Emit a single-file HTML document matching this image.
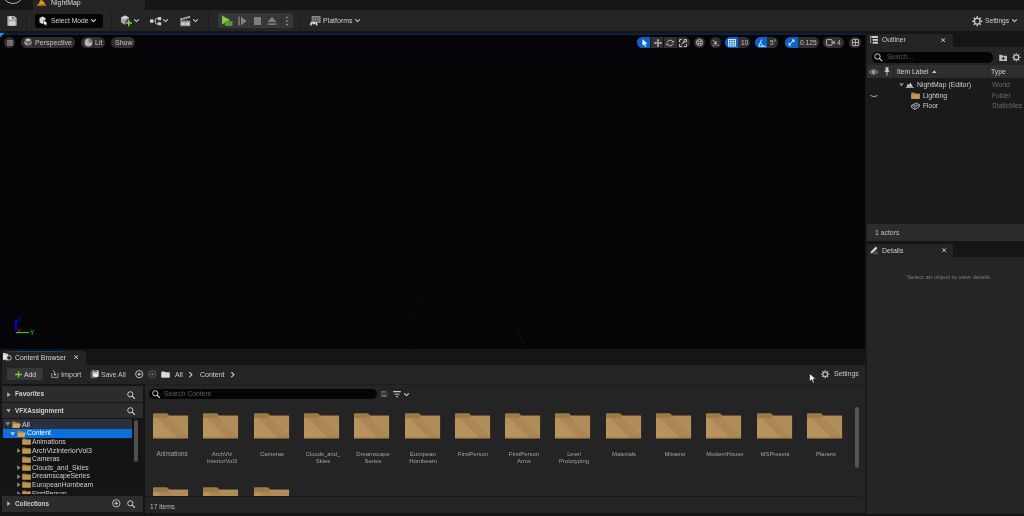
<!DOCTYPE html>
<html><head><meta charset="utf-8"><title>NightMap - Unreal Editor</title>
<style>
*{box-sizing:border-box;margin:0;padding:0}
html,body{width:1024px;height:516px;overflow:hidden;background:#151515}
body{font-family:"Liberation Sans",sans-serif;color:#c0c0c0;font-size:7px;position:relative}
.abs{position:absolute}
.t{position:absolute;white-space:nowrap;line-height:10px;height:10px;will-change:transform}
svg{position:absolute;overflow:visible}
.pill{position:absolute;background:#2c2c2c;border-radius:6px}
.blue{background:#0a62c9}
</style></head><body>
<div class="abs" style="left:0px;top:0px;width:1024px;height:10px;background:#151515;"></div>
<div class="abs" style="left:0;top:0;width:33px;height:10px;overflow:hidden"><div class="abs" style="left:1.7px;top:-18.2px;width:22px;height:22px;border:1px solid #b0b0b0;border-radius:50%"></div></div>
<div class="abs" style="left:33px;top:0px;width:112px;height:10px;background:#242424;"></div>
<svg style="left:37px;top:-3.3px" width="9" height="9" viewBox="0 0 9 9"><path d="M1.2 7.4 L2.4 5.6 L3.4 2 L4.2 5 L5 0.6 L6 5.4 L6.8 4 L7.8 7.4 Z" fill="#f09a18"/><rect x="0" y="7.5" width="9" height="1.1" fill="#f09a18"/></svg>
<div class="t" style="left:50.7px;top:-2.4px;font-size:6.95px;color:#dcdcdc;">NightMap</div>
<div class="abs" style="left:0px;top:10px;width:1024px;height:21.4px;background:#252526;"></div>
<svg style="left:7px;top:16px" width="10" height="10" viewBox="0 0 10 10"><path d="M0.3 0.3 H7.8 L9.7 2.2 V9.7 H0.3 Z" fill="#a4a4a4"/><rect x="1.8" y="0.3" width="5.4" height="3.4" fill="#d6d6d6"/><rect x="5.2" y="0.8" width="1.3" height="2.3" fill="#4a4a4a"/><rect x="1.6" y="5.4" width="6.8" height="4.3" fill="#d0d0d0"/></svg>
<div class="abs" style="left:26px;top:12px;width:1px;height:18px;background:#1c1c1c;"></div>
<div class="abs" style="left:35px;top:14px;width:68px;height:13.5px;background:#050505;border-radius:2px"></div>
<svg style="left:39px;top:16px" width="9" height="10" viewBox="0 0 9 10"><path d="M0.5 2 L3.5 0.5 L6.5 2 V4 L4.5 4.5 L4.5 7.5 L3.5 8 L0.5 6.5 Z" fill="#d8d8d8"/><path d="M5 4.5 L5 9 L6.2 8 L7 9.6 L7.8 9.2 L7 7.6 L8.5 7.4 Z" fill="#fff"/></svg>
<div class="t" style="left:50.5px;top:15.5px;font-size:6.75px;color:#d4d4d4;">Select Mode</div>
<svg style="left:91px;top:19.2px" width="5" height="3.4" viewBox="0 0 6 4"><path d="M0.6 0.6 L3 3.2 L5.4 0.6" fill="none" stroke="#d4d4d4" stroke-width="1.35" stroke-linecap="round" stroke-linejoin="round"/></svg>
<div class="abs" style="left:111px;top:12px;width:1px;height:18px;background:#1c1c1c;"></div>
<svg style="left:120px;top:15px" width="13" height="12" viewBox="0 0 13 12"><path d="M1 2.5 L5 0.5 L9 2.5 V7.5 L5 9.8 L1 7.5 Z" fill="#a8a8a8"/><path d="M1 2.5 L5 4.6 L9 2.5 L5 0.5 Z" fill="#cfcfcf"/><path d="M5 4.6 V9.8 L9 7.5 V2.5 Z" fill="#8a8a8a"/><path d="M8.8 4.6 V11.6 M5.3 8.1 H12.3" stroke="#242424" stroke-width="3.2"/><path d="M8.8 5 V11.2 M5.7 8.1 H11.9" stroke="#7fd444" stroke-width="1.5"/></svg>
<svg style="left:134px;top:19.2px" width="5" height="3.4" viewBox="0 0 6 4"><path d="M0.6 0.6 L3 3.2 L5.4 0.6" fill="none" stroke="#c0c0c0" stroke-width="1.35" stroke-linecap="round" stroke-linejoin="round"/></svg>
<svg style="left:150px;top:16px" width="11" height="10" viewBox="0 0 11 10"><rect x="0" y="3.4" width="3.5" height="3.3" fill="#d0d0d0"/><rect x="7.7" y="1.1" width="3.5" height="3.1" fill="#d0d0d0"/><rect x="7.7" y="6.2" width="3.5" height="3.1" fill="#d0d0d0"/><path d="M3.5 5 H5.6 M5.6 2.6 V7.8 M5.6 2.6 H7.7 M5.6 7.8 H7.7" stroke="#c0c0c0" stroke-width="0.8" fill="none"/></svg>
<svg style="left:163px;top:19.2px" width="5" height="3.4" viewBox="0 0 6 4"><path d="M0.6 0.6 L3 3.2 L5.4 0.6" fill="none" stroke="#c0c0c0" stroke-width="1.35" stroke-linecap="round" stroke-linejoin="round"/></svg>
<svg style="left:180px;top:15.5px" width="11" height="11" viewBox="0 0 11 11"><rect x="0.3" y="4.6" width="10" height="5.6" fill="#9a9a9a"/><path d="M0.2 2.6 L9.6 0 L10.2 1.8 L0.8 4.4 Z" fill="#c8c8c8"/><path d="M2.4 2 L3.4 3.8 M4.8 1.4 L5.8 3.2 M7.2 0.8 L8.2 2.6" stroke="#242424" stroke-width="0.9"/><rect x="1.4" y="6.6" width="3.4" height="2.4" fill="#cfcfcf"/><rect x="5.8" y="6.6" width="3.4" height="2.4" fill="#cfcfcf"/></svg>
<svg style="left:193px;top:19.2px" width="5" height="3.4" viewBox="0 0 6 4"><path d="M0.6 0.6 L3 3.2 L5.4 0.6" fill="none" stroke="#c0c0c0" stroke-width="1.35" stroke-linecap="round" stroke-linejoin="round"/></svg>
<div class="abs" style="left:208px;top:12px;width:1px;height:18px;background:#1c1c1c;"></div>
<div class="abs" style="left:218px;top:13.2px;width:75px;height:14.8px;background:#373737;border-radius:2px"></div>
<div class="abs" style="left:281.4px;top:13.2px;width:0.8px;height:14.8px;background:#2a2a2a;"></div>
<svg style="left:221px;top:15px" width="12" height="12" viewBox="0 0 12 12"><path d="M1 0.5 L9 5 L1 9.4 Z" fill="#86c840"/><rect x="3.9" y="6.2" width="7.6" height="4.6" fill="#5b9a33"/></svg>
<svg style="left:238px;top:16px" width="9" height="10" viewBox="0 0 9 10"><rect x="0.3" y="0.6" width="1.5" height="8.8" fill="#7e7e7e"/><path d="M3 0.6 L8.6 5 L3 9.4 Z" fill="#7e7e7e"/></svg>
<div class="abs" style="left:253.5px;top:16.5px;width:7.6px;height:8.2px;background:#7e7e7e;"></div>
<svg style="left:267px;top:16px" width="10" height="10" viewBox="0 0 10 10"><path d="M5 0.8 L9.4 6 H0.6 Z" fill="#7e7e7e"/><rect x="0.6" y="7.3" width="8.8" height="1.6" fill="#7e7e7e"/></svg>
<svg style="left:286.3px;top:16px" width="2" height="10" viewBox="0 0 2 10"><circle cx="1" cy="1.4" r="0.75" fill="#bcbcbc"/><circle cx="1" cy="4.9" r="0.75" fill="#bcbcbc"/><circle cx="1" cy="8.5" r="0.75" fill="#bcbcbc"/></svg>
<div class="abs" style="left:300px;top:12px;width:1px;height:18px;background:#1c1c1c;"></div>
<svg style="left:309px;top:15px" width="13" height="12" viewBox="0 0 13 12"><rect x="3.1" y="1.6" width="8" height="5.8" fill="#6e6e6e" stroke="#9c9c9c" stroke-width="0.8"/><path d="M0.9 10.8 C0.7 8 1.4 6.3 2.8 6.3 H6.9 C8.3 6.3 9 8 8.8 10.8 C8 11.5 7.2 10.3 6.6 9.4 H3.1 C2.5 10.3 1.7 11.5 0.9 10.8 Z" fill="#e6e6e6" stroke="#252526" stroke-width="0.6"/><circle cx="3.2" cy="8" r="0.55" fill="#444"/><circle cx="6.5" cy="8" r="0.55" fill="#444"/></svg>
<div class="t" style="left:322.5px;top:15.5px;font-size:7px;color:#cfcfcf;">Platforms</div>
<svg style="left:354.5px;top:19.2px" width="5" height="3.4" viewBox="0 0 6 4"><path d="M0.6 0.6 L3 3.2 L5.4 0.6" fill="none" stroke="#c0c0c0" stroke-width="1.35" stroke-linecap="round" stroke-linejoin="round"/></svg>
<svg style="left:972px;top:15.5px" width="10.5" height="10.5" viewBox="0 0 10 10"><g transform="translate(5 5)"><circle r="2.7" fill="none" stroke="#c8c8c8" stroke-width="1.25"/><rect x="-0.7" y="-4.8" width="1.4" height="1.9" fill="#c8c8c8" transform="rotate(0)"/><rect x="-0.7" y="-4.8" width="1.4" height="1.9" fill="#c8c8c8" transform="rotate(45)"/><rect x="-0.7" y="-4.8" width="1.4" height="1.9" fill="#c8c8c8" transform="rotate(90)"/><rect x="-0.7" y="-4.8" width="1.4" height="1.9" fill="#c8c8c8" transform="rotate(135)"/><rect x="-0.7" y="-4.8" width="1.4" height="1.9" fill="#c8c8c8" transform="rotate(180)"/><rect x="-0.7" y="-4.8" width="1.4" height="1.9" fill="#c8c8c8" transform="rotate(225)"/><rect x="-0.7" y="-4.8" width="1.4" height="1.9" fill="#c8c8c8" transform="rotate(270)"/><rect x="-0.7" y="-4.8" width="1.4" height="1.9" fill="#c8c8c8" transform="rotate(315)"/></g></svg>
<div class="t" style="left:984.7px;top:15.5px;font-size:6.7px;color:#cfcfcf;">Settings</div>
<svg style="left:1012px;top:19.3px" width="5" height="3.4" viewBox="0 0 6 4"><path d="M0.6 0.6 L3 3.2 L5.4 0.6" fill="none" stroke="#c0c0c0" stroke-width="1.35" stroke-linecap="round" stroke-linejoin="round"/></svg>
<div class="abs" style="left:0px;top:31px;width:1024px;height:3px;background:#151515;"></div>
<div class="abs" style="left:0px;top:33.3px;width:865px;height:1.5px;background:#09213d;"></div>
<div class="abs" style="left:0px;top:35px;width:865px;height:314px;background:#050406;"></div>
<svg style="left:0;top:33.4px" width="5" height="5" viewBox="0 0 5 5"><path d="M0 0 H4.4 L0 4.4 Z" fill="#1a8cff"/></svg>
<div class="abs" style="left:4px;top:36.6px;width:11.4px;height:11.4px;background:#2f2f2f;border-radius:50%"></div>
<svg style="left:6.8px;top:40px" width="6" height="6" viewBox="0 0 6 6"><path d="M0 0.9 H6 M0 2.9 H6 M0 4.9 H6" stroke="#d4d4d4" stroke-width="0.8"/></svg>
<div class="abs" style="left:21px;top:36.5px;width:54px;height:11.5px;background:#2f2f2f;border-radius:6px"></div>
<svg style="left:24px;top:38.1px" width="8.3" height="8.3" viewBox="0 0 9 9"><path d="M4.5 0.4 L8.3 2.3 L4.5 4.2 L0.7 2.3 Z" fill="#c4c4c4"/><path d="M0.5 2.9 L4.2 4.8 V8.8 L0.5 6.8 Z" fill="#9a9a9a"/><path d="M8.5 2.9 L4.8 4.8 V8.8 L8.5 6.8 Z" fill="#808080"/></svg>
<div class="t" style="left:34.5px;top:37.7px;font-size:7.1px;color:#c4c4c4;">Perspective</div>
<div class="abs" style="left:81px;top:36.5px;width:24px;height:11.5px;background:#2f2f2f;border-radius:6px"></div>
<svg style="left:84px;top:38px" width="9" height="9" viewBox="0 0 9 9"><circle cx="4.5" cy="4.5" r="3.9" fill="#b4b4b4"/><path d="M4.5 4.5 V0.6 A3.9 3.9 0 0 1 8.4 4.5 Z" fill="#7a7a7a"/></svg>
<div class="t" style="left:94.5px;top:37.7px;font-size:7px;color:#c4c4c4;">Lit</div>
<div class="abs" style="left:111px;top:36.5px;width:24px;height:11.5px;background:#2f2f2f;border-radius:6px"></div>
<div class="t" style="left:115px;top:37.7px;font-size:7px;color:#c4c4c4;">Show</div>
<div class="abs" style="left:637.2px;top:36.7px;width:52.4px;height:11.4px;background:#2f2f2f;border-radius:6px"></div>
<div class="abs" style="left:637.2px;top:36.7px;width:13.3px;height:11.4px;background:#0b62cc;border-radius:6px 0 0 6px"></div>
<svg style="left:641.5px;top:38.8px" width="6" height="8" viewBox="0 0 6 8"><path d="M0.5 0.3 L0.5 6.6 L2.1 5.2 L3.2 7.7 L4.2 7.2 L3.1 4.8 L5.3 4.6 Z" fill="#fff"/></svg>
<div class="abs" style="left:650.3px;top:36.7px;width:0.8px;height:11.4px;background:#111;"></div>
<div class="abs" style="left:663.4px;top:36.7px;width:0.8px;height:11.4px;background:#111;"></div>
<div class="abs" style="left:676.8px;top:36.7px;width:0.8px;height:11.4px;background:#111;"></div>
<svg style="left:653.5px;top:38.5px" width="8" height="8" viewBox="0 0 8 8"><path d="M4 0.8 V7.2 M0.8 4 H7.2" stroke="#dcdcdc" stroke-width="0.9"/><path d="M4 0 L5.3 1.5 H2.7 Z M4 8 L5.3 6.5 H2.7 Z M0 4 L1.5 2.7 V5.3 Z M8 4 L6.5 2.7 V5.3 Z" fill="#dcdcdc"/></svg>
<svg style="left:666px;top:38.5px" width="8" height="8" viewBox="0 0 8 8"><path d="M1.2 3.2 A3 3 0 0 1 6.6 2.6 M6.8 4.8 A3 3 0 0 1 1.4 5.4" stroke="#c8c8c8" stroke-width="0.9" fill="none"/><path d="M7.6 1.2 V3.6 H5.2 Z M0.4 6.8 V4.4 H2.8 Z" fill="#c8c8c8"/></svg>
<svg style="left:679.3px;top:38.5px" width="8" height="8" viewBox="0 0 8 8"><path d="M0.5 3 V0.5 H3 M5 0.5 H7.5 V3 M7.5 5 V7.5 H5 M3 7.5 H0.5 V5" stroke="#c8c8c8" stroke-width="0.9" fill="none"/><path d="M2.6 5.4 L5.4 2.6" stroke="#c8c8c8" stroke-width="0.9"/><rect x="4.4" y="1.6" width="2" height="2" fill="#c8c8c8"/></svg>
<div class="abs" style="left:694px;top:36.7px;width:11.4px;height:11.4px;background:#2f2f2f;border-radius:6px"></div>
<svg style="left:696px;top:39px" width="7" height="7" viewBox="0 0 7 7"><circle cx="3.5" cy="3.5" r="3.1" fill="none" stroke="#d4d4d4" stroke-width="0.8"/><path d="M2.5 0.9 V6.1 M4.5 0.9 V6.1 M0.9 2.5 H6.1 M0.9 4.5 H6.1" stroke="#a8a8a8" stroke-width="0.7"/></svg>
<div class="abs" style="left:709.5px;top:36.7px;width:11.5px;height:11.4px;background:#2f2f2f;border-radius:6px"></div>
<svg style="left:711.5px;top:38.5px" width="8" height="8" viewBox="0 0 8 8"><path d="M0.5 0.8 L4 4.3 M4.2 2 V4.5 H1.7" stroke="#c8c8c8" stroke-width="0.9" fill="none"/><path d="M0.5 7 Q4 4.6 7.5 7" stroke="#c8c8c8" stroke-width="0.9" fill="none" stroke-dasharray="1.2 0.8"/></svg>
<div class="abs" style="left:725px;top:36.7px;width:25.3px;height:11.4px;background:#2f2f2f;border-radius:6px"></div>
<div class="abs" style="left:725px;top:36.7px;width:12.5px;height:11.4px;background:#0b62cc;border-radius:6px 0 0 6px"></div>
<svg style="left:727.8px;top:38.8px" width="8" height="7.4" viewBox="0 0 8 7.4"><rect x="0.4" y="0.4" width="7.2" height="6.6" fill="none" stroke="#fff" stroke-width="0.8"/><path d="M0.4 2.6 H7.6 M0.4 4.8 H7.6 M2.8 0.4 V7 M5.2 0.4 V7" stroke="#fff" stroke-width="0.7"/></svg>
<div class="t" style="left:740.5px;top:37.7px;font-size:6.6px;color:#c4c4c4;">10</div>
<div class="abs" style="left:754.6px;top:36.7px;width:23.2px;height:11.4px;background:#2f2f2f;border-radius:6px"></div>
<div class="abs" style="left:754.5px;top:36.7px;width:12.5px;height:11.4px;background:#0b62cc;border-radius:6px 0 0 6px"></div>
<svg style="left:758px;top:38.6px" width="8" height="8" viewBox="0 0 8 8"><path d="M3.6 0.6 L0.8 7.2 H7.6" stroke="#fff" stroke-width="0.9" fill="none"/><path d="M2.2 4 Q4.6 4.6 4.8 7.2" stroke="#fff" stroke-width="0.7" fill="none"/></svg>
<div class="t" style="left:769.8px;top:37.7px;font-size:6.6px;color:#c4c4c4;">5°</div>
<div class="abs" style="left:785px;top:36.7px;width:33.5px;height:11.4px;background:#2f2f2f;border-radius:6px"></div>
<div class="abs" style="left:785px;top:36.7px;width:12.5px;height:11.4px;background:#0b62cc;border-radius:6px 0 0 6px"></div>
<svg style="left:788.3px;top:39px" width="7" height="7" viewBox="0 0 7 7"><path d="M1.4 5.6 L5.6 1.4" stroke="#fff" stroke-width="1"/><path d="M3.6 0.6 H6.4 V3.4 Z M0.6 3.6 V6.4 H3.4 Z" fill="#fff"/></svg>
<div class="t" style="left:800.4px;top:37.7px;font-size:6.65px;color:#c4c4c4;">0.125</div>
<div class="abs" style="left:822.8px;top:36.7px;width:21px;height:11.4px;background:#2f2f2f;border-radius:6px"></div>
<svg style="left:826px;top:39.2px" width="9" height="7" viewBox="0 0 9 7"><rect x="0.5" y="0.6" width="5.6" height="5.6" rx="0.8" fill="none" stroke="#c8c8c8" stroke-width="0.9"/><path d="M6.4 3.4 L8.6 1.4 V5.4 Z" fill="#c8c8c8"/></svg>
<div class="t" style="left:837.3px;top:37.7px;font-size:6.6px;color:#c4c4c4;">4</div>
<div class="abs" style="left:849.4px;top:36.7px;width:11.5px;height:11.4px;background:#2f2f2f;border-radius:6px"></div>
<svg style="left:851.6px;top:39px" width="7" height="7" viewBox="0 0 7 7"><rect x="0.4" y="0.4" width="6.2" height="6.2" rx="0.6" fill="none" stroke="#c8c8c8" stroke-width="0.8"/><path d="M3.5 0.4 V6.6 M0.4 3.5 H6.6" stroke="#c8c8c8" stroke-width="0.8"/></svg>
<div class="t" style="left:17.4px;top:327.1px;font-size:6.6px;color:#c00808;font-weight:bold">X</div>
<div class="abs" style="left:15.1px;top:319.8px;width:1.8px;height:12.6px;background:#0404c4;"></div>
<div class="abs" style="left:16px;top:331.7px;width:13.1px;height:1.3px;background:#12e012;"></div>
<div class="t" style="left:17.4px;top:314.7px;font-size:6.6px;color:#0606d0;font-weight:bold">Z</div>
<div class="t" style="left:29.8px;top:327.6px;font-size:6.6px;color:#10a410;font-weight:bold">Y</div>
<svg style="left:0;top:34px" width="865" height="315" viewBox="0 0 865 315"><path d="M421 214 L413 314" stroke="#160a0c" stroke-width="0.7"/><path d="M516 295 L526 314" stroke="#1a1a1c" stroke-width="0.7"/></svg>
<div class="abs" style="left:865px;top:34px;width:2.4px;height:482px;background:#181818;"></div>
<div class="abs" style="left:867px;top:34px;width:157px;height:12.7px;background:#151515;"></div>
<div class="abs" style="left:867px;top:34px;width:85.5px;height:13px;background:#242424;border-radius:2px 2px 0 0"></div>
<svg style="left:870.3px;top:36.2px" width="8" height="8" viewBox="0 0 8 8"><path d="M0 0.6 H2 M0 6.4 H1.4 M0.6 0.6 V6.4" stroke="#c8c8c8" stroke-width="0.7" fill="none"/><rect x="1.6" y="0" width="6.4" height="1.9" fill="#d0d0d0"/><rect x="2.6" y="2.9" width="5.4" height="1.9" fill="#d0d0d0"/><rect x="2.6" y="5.8" width="5.4" height="1.9" fill="#d0d0d0"/></svg>
<div class="t" style="left:882px;top:35px;font-size:6.75px;color:#cfcfcf;">Outliner</div>
<svg style="left:941.3px;top:37.8px" width="4.4" height="4.4" viewBox="0 0 4.4 4.4"><path d="M0.4 0.4 L4 4 M4 0.4 L0.4 4" stroke="#d0d0d0" stroke-width="1"/></svg>
<div class="abs" style="left:867px;top:46.7px;width:157px;height:18px;background:#242424;"></div>
<div class="abs" style="left:872.3px;top:52px;width:120.7px;height:10.5px;background:#050505;border-radius:5.3px"></div>
<svg style="left:874.4px;top:53.2px" width="8.4" height="8.4" viewBox="0 0 8 8"><circle cx="3.3" cy="3.3" r="2.6" fill="none" stroke="#d0d0d0" stroke-width="0.95"/><path d="M5.2 5.2 L7.5 7.5" stroke="#d0d0d0" stroke-width="1.1" stroke-linecap="round"/></svg>
<div class="t" style="left:886.7px;top:52.1px;font-size:6.55px;color:#5a5a5a;">Search...</div>
<svg style="left:999px;top:53.5px" width="8.2" height="7.2" viewBox="0 0 8 7"><path d="M0.2 0.6 H3 L3.8 1.6 H7.8 V6.8 H0.2 Z" fill="#bdbdbd"/><path d="M4.2 2.6 V6 M2.5 4.3 H5.9" stroke="#242424" stroke-width="0.9"/></svg>
<svg style="left:1011.8px;top:53px" width="8.6" height="8.6" viewBox="0 0 10 10"><g transform="translate(5 5)"><circle r="2.7" fill="none" stroke="#c4c4c4" stroke-width="1.25"/><rect x="-0.7" y="-4.8" width="1.4" height="1.9" fill="#c4c4c4" transform="rotate(0)"/><rect x="-0.7" y="-4.8" width="1.4" height="1.9" fill="#c4c4c4" transform="rotate(45)"/><rect x="-0.7" y="-4.8" width="1.4" height="1.9" fill="#c4c4c4" transform="rotate(90)"/><rect x="-0.7" y="-4.8" width="1.4" height="1.9" fill="#c4c4c4" transform="rotate(135)"/><rect x="-0.7" y="-4.8" width="1.4" height="1.9" fill="#c4c4c4" transform="rotate(180)"/><rect x="-0.7" y="-4.8" width="1.4" height="1.9" fill="#c4c4c4" transform="rotate(225)"/><rect x="-0.7" y="-4.8" width="1.4" height="1.9" fill="#c4c4c4" transform="rotate(270)"/><rect x="-0.7" y="-4.8" width="1.4" height="1.9" fill="#c4c4c4" transform="rotate(315)"/></g></svg>
<div class="abs" style="left:867px;top:64.5px;width:157px;height:13.8px;background:#2f2f2f;"></div>
<div class="abs" style="left:880.6px;top:64.5px;width:1px;height:13.8px;background:#242424;"></div>
<div class="abs" style="left:893px;top:64.5px;width:1px;height:13.8px;background:#242424;"></div>
<div class="abs" style="left:988.2px;top:64.5px;width:1px;height:13.8px;background:#242424;"></div>
<svg style="left:869.3px;top:69px" width="9" height="6" viewBox="0 0 9 6"><path d="M0.4 3 Q4.5 -1.4 8.6 3 Q4.5 7.4 0.4 3 Z" fill="none" stroke="#c8c8c8" stroke-width="0.8"/><circle cx="4.5" cy="3" r="1.3" fill="#c8c8c8"/></svg>
<svg style="left:884px;top:67.3px" width="6" height="9" viewBox="0 0 6 9"><path d="M1.6 0.3 H4.4 V3.2 L5.6 5 H0.4 L1.6 3.2 Z" fill="#c8c8c8"/><path d="M3 5 V8.6" stroke="#c8c8c8" stroke-width="0.9"/></svg>
<div class="t" style="left:897px;top:67px;font-size:6.75px;color:#cfcfcf;">Item Label</div>
<svg style="left:931.6px;top:70.2px" width="4.6" height="3.2" viewBox="0 0 4.6 3.2"><path d="M2.3 0.2 L4.5 3 H0.1 Z" fill="#cfcfcf"/></svg>
<div class="t" style="left:991px;top:67px;font-size:6.85px;color:#cfcfcf;">Type</div>
<div class="abs" style="left:867px;top:78.3px;width:157px;height:146px;background:#1a1a1a;"></div>
<svg style="left:898.5px;top:83px" width="5" height="3.6" viewBox="0 0 5 3.6"><path d="M0.2 0.3 H4.8 L2.5 3.4 Z" fill="#8a8a8a"/></svg>
<svg style="left:905.6px;top:81.8px" width="7.6" height="6.2" viewBox="0 0 9 7"><path d="M0.6 5.6 L2.4 1.6 L3.6 3.8 L5 0.4 L8.2 5.6 Z" fill="#d0d0d0"/><rect x="0" y="6" width="9" height="0.9" fill="#d0d0d0"/></svg>
<div class="t" style="left:917px;top:80px;font-size:6.9px;color:#d0d0d0;">NightMap (Editor)</div>
<div class="t" style="left:992px;top:80px;font-size:6.9px;color:#6c6c6c;">World</div>
<svg style="left:869.6px;top:94.8px" width="8" height="3" viewBox="0 0 8 3"><path d="M0.4 0.4 Q4 3.2 7.6 0.4" fill="none" stroke="#c8c8c8" stroke-width="0.8"/></svg>
<svg style="left:911px;top:92.4px" width="9" height="7" viewBox="0 0 9 7"><path d="M0.2 0.4 H3.4 L4.2 1.4 H8.8 V6.8 H0.2 Z" fill="#a07d3c"/><rect x="0.2" y="2.2" width="8.6" height="4.6" fill="#c0974f"/></svg>
<div class="t" style="left:923px;top:90.7px;font-size:6.9px;color:#d0d0d0;">Lighting</div>
<div class="t" style="left:992px;top:90.7px;font-size:6.55px;color:#6c6c6c;">Folder</div>
<svg style="left:911px;top:102.2px" width="9" height="8" viewBox="0 0 9 8"><path d="M0.6 3.4 L5.2 1 L8.4 2.6 V4.8 L3.8 7.4 L0.6 5.6 Z" fill="none" stroke="#c8c8c8" stroke-width="0.8"/><path d="M0.6 3.4 L3.8 5 L8.4 2.6 M3.8 5 V7.4" stroke="#c8c8c8" stroke-width="0.7" fill="none"/><ellipse cx="3.4" cy="2.9" rx="0.9" ry="0.5" fill="#c8c8c8"/><ellipse cx="5.6" cy="2.9" rx="0.9" ry="0.5" fill="#c8c8c8"/></svg>
<div class="t" style="left:923px;top:101.3px;font-size:6.6px;color:#d0d0d0;">Floor</div>
<div class="t" style="left:992px;top:101.3px;font-size:6.9px;color:#6c6c6c;">StaticMes</div>
<div class="abs" style="left:867px;top:224px;width:157px;height:17px;background:#2c2c2c;"></div>
<div class="t" style="left:875.3px;top:227.9px;font-size:6.85px;color:#c0c0c0;">1 actors</div>
<div class="abs" style="left:867px;top:241px;width:157px;height:16px;background:#151515;"></div>
<div class="abs" style="left:867px;top:243.5px;width:86px;height:13.5px;background:#242424;border-radius:2px 2px 0 0"></div>
<svg style="left:870px;top:246px" width="8" height="8" viewBox="0 0 8 8"><path d="M0.4 7.6 L0.9 5.4 L5.8 0.5 L7.5 2.2 L2.6 7.1 Z" fill="#d0d0d0"/><path d="M3.6 7.6 H7.8" stroke="#909090" stroke-width="0.7"/><path d="M4.4 6 H7.8" stroke="#909090" stroke-width="0.5"/></svg>
<div class="t" style="left:882px;top:245.8px;font-size:7px;color:#cfcfcf;">Details</div>
<svg style="left:941.5px;top:248px" width="4.4" height="4.4" viewBox="0 0 4.4 4.4"><path d="M0.4 0.4 L4 4 M4 0.4 L0.4 4" stroke="#d0d0d0" stroke-width="1"/></svg>
<div class="abs" style="left:867.3px;top:257px;width:157px;height:256.6px;background:#252526;"></div>
<div class="t" style="left:906.5px;top:271.7px;font-size:6.07px;color:#7c7c7c;">Select an object to view details.</div>
<div class="abs" style="left:0px;top:348.7px;width:865px;height:167.3px;background:#151515;"></div>
<div class="abs" style="left:2px;top:351px;width:84px;height:14px;background:#242424;border-radius:3px 3px 0 0"></div>
<div class="abs" style="left:3px;top:350.9px;width:70px;height:0.9px;background:transparent;background:linear-gradient(90deg,rgba(14,74,138,0),#0e4a8a 25%,#0e4a8a 75%,rgba(14,74,138,0))"></div>
<svg style="left:3px;top:353.2px" width="9" height="8" viewBox="0 0 9 8"><path d="M0 0 H2.4 L3 0.8 H5 V1.6 H0 Z" fill="#d8d8d8"/><rect x="0" y="1.2" width="5.2" height="5.6" fill="#e4e4e4"/><circle cx="6" cy="4.8" r="2.3" fill="#242424" stroke="#d0d0d0" stroke-width="0.8"/><path d="M4.4 6.5 L3.4 7.8" stroke="#d0d0d0" stroke-width="0.9"/></svg>
<div class="t" style="left:14.5px;top:352.6px;font-size:6.85px;color:#d4d4d4;">Content Browser</div>
<svg style="left:73.8px;top:355.4px" width="4.4" height="4.4" viewBox="0 0 4.4 4.4"><path d="M0.4 0.4 L4 4 M4 0.4 L0.4 4" stroke="#d0d0d0" stroke-width="1"/></svg>
<div class="abs" style="left:2px;top:364.7px;width:862.8px;height:19.6px;background:#242424;"></div>
<div class="abs" style="left:7px;top:368px;width:36px;height:12px;background:#383838;border-radius:2px"></div>
<svg style="left:14.6px;top:370.6px" width="7" height="7" viewBox="0 0 7 7"><path d="M3.5 0.2 V6.8 M0.2 3.5 H6.8" stroke="#7bd13a" stroke-width="1.3"/></svg>
<div class="t" style="left:24px;top:369.8px;font-size:6.8px;color:#d8d8d8;">Add</div>
<svg style="left:50.8px;top:369.7px" width="7.6" height="8" viewBox="0 0 8 9"><path d="M0.5 3.4 V8.4 H7.5 V3.4" fill="none" stroke="#bdbdbd" stroke-width="0.8"/><path d="M1.8 0.4 Q4.2 1 4.2 5.6" fill="none" stroke="#d4d4d4" stroke-width="0.9"/><path d="M2.6 4.6 L4.2 6.6 L5.8 4.6 Z" fill="#d4d4d4"/></svg>
<div class="t" style="left:61px;top:369.8px;font-size:7.15px;color:#c8c8c8;">Import</div>
<svg style="left:91.4px;top:370.2px" width="8" height="8" viewBox="0 0 8 8"><path d="M0.2 1.6 V7.8 H6 " fill="none" stroke="#a0a0a0" stroke-width="0.7"/><path d="M1.4 0.2 H6.8 L7.8 1.2 V6.8 H1.4 Z" fill="#c8c8c8"/><rect x="2.6" y="0.2" width="3.4" height="2" fill="#666"/><rect x="2.4" y="3.8" width="4.4" height="3" fill="#efefef"/></svg>
<div class="t" style="left:101.4px;top:369.8px;font-size:6.85px;color:#c8c8c8;">Save All</div>
<svg style="left:135.2px;top:369.8px" width="8.4" height="8.4" viewBox="0 0 8.4 8.4"><circle cx="4.2" cy="4.2" r="3.6" fill="none" stroke="#d4d4d4" stroke-width="0.85"/><path d="M2.2 4.2 L4.6 2.4 V6 Z" fill="#d4d4d4"/><path d="M4.4 4.2 H6.4" stroke="#d4d4d4" stroke-width="0.9"/></svg>
<svg style="left:148px;top:369.8px" width="8.4" height="8.4" viewBox="0 0 8.4 8.4"><circle cx="4.2" cy="4.2" r="3.6" fill="none" stroke="#6a6a6a" stroke-width="0.85"/><path d="M6.2 4.2 L3.8 2.4 V6 Z" fill="#6a6a6a"/><path d="M4 4.2 H2" stroke="#6a6a6a" stroke-width="0.9"/></svg>
<svg style="left:160.8px;top:370.6px" width="9" height="6.6" viewBox="0 0 9 7"><path d="M0.2 0.4 H3.4 L4.2 1.4 H8.8 V6.8 H0.2 Z" fill="#d8d8d8"/><rect x="0.2" y="2.2" width="8.6" height="4.6" fill="#d8d8d8"/></svg>
<div class="t" style="left:174.6px;top:370px;font-size:7px;color:#d0d0d0;">All</div>
<svg style="left:189.4px;top:371.5px" width="3.6" height="5.4" viewBox="0 0 3.6 5.4"><path d="M0.6 0.5 L3 2.7 L0.6 4.9" fill="none" stroke="#d0d0d0" stroke-width="1.1" stroke-linecap="round" stroke-linejoin="round"/></svg>
<div class="t" style="left:200px;top:370px;font-size:7px;color:#d0d0d0;">Content</div>
<svg style="left:231px;top:371.5px" width="3.6" height="5.4" viewBox="0 0 3.6 5.4"><path d="M0.6 0.5 L3 2.7 L0.6 4.9" fill="none" stroke="#d0d0d0" stroke-width="1.1" stroke-linecap="round" stroke-linejoin="round"/></svg>
<svg style="left:821px;top:370px" width="8.4" height="8.4" viewBox="0 0 10 10"><g transform="translate(5 5)"><circle r="2.7" fill="none" stroke="#c4c4c4" stroke-width="1.25"/><rect x="-0.7" y="-4.8" width="1.4" height="1.9" fill="#c4c4c4" transform="rotate(0)"/><rect x="-0.7" y="-4.8" width="1.4" height="1.9" fill="#c4c4c4" transform="rotate(45)"/><rect x="-0.7" y="-4.8" width="1.4" height="1.9" fill="#c4c4c4" transform="rotate(90)"/><rect x="-0.7" y="-4.8" width="1.4" height="1.9" fill="#c4c4c4" transform="rotate(135)"/><rect x="-0.7" y="-4.8" width="1.4" height="1.9" fill="#c4c4c4" transform="rotate(180)"/><rect x="-0.7" y="-4.8" width="1.4" height="1.9" fill="#c4c4c4" transform="rotate(225)"/><rect x="-0.7" y="-4.8" width="1.4" height="1.9" fill="#c4c4c4" transform="rotate(270)"/><rect x="-0.7" y="-4.8" width="1.4" height="1.9" fill="#c4c4c4" transform="rotate(315)"/></g></svg>
<div class="t" style="left:834px;top:369.3px;font-size:6.8px;color:#c8c8c8;">Settings</div>
<svg style="left:808.6px;top:373.2px" width="8" height="11" viewBox="0 0 8 11"><path d="M0.6 0.6 V8.6 L2.6 6.8 L4 10 L5.4 9.4 L4 6.2 L6.8 6 Z" fill="#fff" stroke="#111" stroke-width="0.6"/></svg>
<div class="abs" style="left:2px;top:385.4px;width:140.5px;height:130px;background:#161616;"></div>
<div class="abs" style="left:2px;top:386.4px;width:140.5px;height:15.4px;background:#2c2c2c;"></div>
<div class="abs" style="left:2px;top:403.2px;width:140.5px;height:15.2px;background:#2c2c2c;"></div>
<svg style="left:7.4px;top:391.6px" width="3.8" height="5.4" viewBox="0 0 3.6 5"><path d="M0.2 0.2 L3.4 2.5 L0.2 4.8 Z" fill="#b0b0b0"/></svg>
<div class="t" style="left:14.5px;top:389.2px;font-size:6.55px;color:#d0d0d0;font-weight:bold">Favorites</div>
<svg style="left:127px;top:390.6px" width="8" height="8" viewBox="0 0 8 8"><circle cx="3.3" cy="3.3" r="2.6" fill="none" stroke="#d0d0d0" stroke-width="0.95"/><path d="M5.2 5.2 L7.5 7.5" stroke="#d0d0d0" stroke-width="1.1" stroke-linecap="round"/></svg>
<svg style="left:5.8px;top:408.9px" width="5" height="3.6" viewBox="0 0 5 3.6"><path d="M0.2 0.2 H4.8 L2.5 3.4 Z" fill="#b0b0b0"/></svg>
<div class="t" style="left:14.5px;top:405.7px;font-size:6.35px;color:#d0d0d0;font-weight:bold">VFXAssignment</div>
<svg style="left:127px;top:407px" width="8" height="8" viewBox="0 0 8 8"><circle cx="3.3" cy="3.3" r="2.6" fill="none" stroke="#d0d0d0" stroke-width="0.95"/><path d="M5.2 5.2 L7.5 7.5" stroke="#d0d0d0" stroke-width="1.1" stroke-linecap="round"/></svg>
<div class="abs" style="left:3.2px;top:419px;width:138px;height:75.2px;background:#141414;"></div>
<div class="abs" style="left:3.2px;top:419.4px;width:129.2px;height:9.3px;background:#2a303c;"></div>
<div class="abs" style="left:3.2px;top:428.7px;width:129.2px;height:9px;background:#0b70de;"></div>
<div class="abs" style="left:134.4px;top:420.4px;width:3.2px;height:42px;background:#505050;border-radius:2px"></div>
<svg style="left:4.8px;top:422px" width="5.6" height="4" viewBox="0 0 5 3.6"><path d="M0.2 0.2 H4.8 L2.5 3.4 Z" fill="#8a8a8a"/></svg>
<svg style="left:12px;top:421px" width="9" height="7" viewBox="0 0 9 7"><path d="M0.2 0.4 H3.2 L4 1.4 H7.4 V6.8 H0.2 Z" fill="#a5813f"/><path d="M1.8 2.8 H9 L7.4 6.8 H0.2 Z" fill="#d2a85e"/></svg>
<div class="t" style="left:21.6px;top:419.6px;font-size:7.1px;color:#dcdcdc;">All</div>
<svg style="left:10.3px;top:431.5px" width="5.3" height="3.9" viewBox="0 0 5 3.6"><path d="M0.2 0.2 H4.8 L2.5 3.4 Z" fill="#b8d0f0"/></svg>
<svg style="left:17.4px;top:429.8px" width="9" height="7" viewBox="0 0 9 7"><path d="M0.2 0.4 H3.2 L4 1.4 H7.4 V6.8 H0.2 Z" fill="#a5813f"/><path d="M1.8 2.8 H9 L7.4 6.8 H0.2 Z" fill="#d2a85e"/></svg>
<div class="t" style="left:26.8px;top:428.4px;font-size:6.8px;color:#ffffff;">Content</div>
<div class="abs" style="left:3.2px;top:438px;width:129.5px;height:56.2px;overflow:hidden">
<svg style="left:19.0px;top:0.2999999999999772px" width="9" height="6.8" viewBox="0 0 9 7"><path d="M0.2 0.4 H3.4 L4.2 1.4 H8.8 V6.8 H0.2 Z" fill="#a07d3c"/><rect x="0.2" y="2.2" width="8.6" height="4.6" fill="#c0974f"/></svg>
<div class="t" style="left:29.000000000000004px;top:-1.1000000000000227px;font-size:6.8px;color:#d0d0d0;">Animations</div>
<svg style="left:13.800000000000002px;top:9.919999999999982px" width="3.8" height="5.4" viewBox="0 0 3.6 5"><path d="M0.2 0.2 L3.4 2.5 L0.2 4.8 Z" fill="#8a8a8a"/></svg>
<svg style="left:19.0px;top:8.919999999999982px" width="9" height="6.8" viewBox="0 0 9 7"><path d="M0.2 0.4 H3.4 L4.2 1.4 H8.8 V6.8 H0.2 Z" fill="#a07d3c"/><rect x="0.2" y="2.2" width="8.6" height="4.6" fill="#c0974f"/></svg>
<div class="t" style="left:29.000000000000004px;top:7.519999999999982px;font-size:7.05px;color:#d0d0d0;">ArchVizInteriorVol3</div>
<svg style="left:19.0px;top:17.539999999999985px" width="9" height="6.8" viewBox="0 0 9 7"><path d="M0.2 0.4 H3.4 L4.2 1.4 H8.8 V6.8 H0.2 Z" fill="#a07d3c"/><rect x="0.2" y="2.2" width="8.6" height="4.6" fill="#c0974f"/></svg>
<div class="t" style="left:29.000000000000004px;top:16.139999999999986px;font-size:6.8px;color:#d0d0d0;">Cameras</div>
<svg style="left:13.800000000000002px;top:27.15999999999999px" width="3.8" height="5.4" viewBox="0 0 3.6 5"><path d="M0.2 0.2 L3.4 2.5 L0.2 4.8 Z" fill="#8a8a8a"/></svg>
<svg style="left:19.0px;top:26.15999999999999px" width="9" height="6.8" viewBox="0 0 9 7"><path d="M0.2 0.4 H3.4 L4.2 1.4 H8.8 V6.8 H0.2 Z" fill="#a07d3c"/><rect x="0.2" y="2.2" width="8.6" height="4.6" fill="#c0974f"/></svg>
<div class="t" style="left:29.000000000000004px;top:24.75999999999999px;font-size:6.8px;color:#d0d0d0;">Clouds_and_Skies</div>
<svg style="left:13.800000000000002px;top:35.779999999999994px" width="3.8" height="5.4" viewBox="0 0 3.6 5"><path d="M0.2 0.2 L3.4 2.5 L0.2 4.8 Z" fill="#8a8a8a"/></svg>
<svg style="left:19.0px;top:34.779999999999994px" width="9" height="6.8" viewBox="0 0 9 7"><path d="M0.2 0.4 H3.4 L4.2 1.4 H8.8 V6.8 H0.2 Z" fill="#a07d3c"/><rect x="0.2" y="2.2" width="8.6" height="4.6" fill="#c0974f"/></svg>
<div class="t" style="left:29.000000000000004px;top:33.379999999999995px;font-size:6.8px;color:#d0d0d0;">DreamscapeSeries</div>
<svg style="left:13.800000000000002px;top:44.4px" width="3.8" height="5.4" viewBox="0 0 3.6 5"><path d="M0.2 0.2 L3.4 2.5 L0.2 4.8 Z" fill="#8a8a8a"/></svg>
<svg style="left:19.0px;top:43.4px" width="9" height="6.8" viewBox="0 0 9 7"><path d="M0.2 0.4 H3.4 L4.2 1.4 H8.8 V6.8 H0.2 Z" fill="#a07d3c"/><rect x="0.2" y="2.2" width="8.6" height="4.6" fill="#c0974f"/></svg>
<div class="t" style="left:29.000000000000004px;top:42.0px;font-size:6.8px;color:#d0d0d0;">EuropeanHornbeam</div>
<svg style="left:13.800000000000002px;top:53.02px" width="3.8" height="5.4" viewBox="0 0 3.6 5"><path d="M0.2 0.2 L3.4 2.5 L0.2 4.8 Z" fill="#8a8a8a"/></svg>
<svg style="left:19.0px;top:52.02px" width="9" height="6.8" viewBox="0 0 9 7"><path d="M0.2 0.4 H3.4 L4.2 1.4 H8.8 V6.8 H0.2 Z" fill="#a07d3c"/><rect x="0.2" y="2.2" width="8.6" height="4.6" fill="#c0974f"/></svg>
<div class="t" style="left:29.000000000000004px;top:50.620000000000005px;font-size:6.8px;color:#d0d0d0;">FirstPerson</div>
</div>
<div class="abs" style="left:2px;top:495.7px;width:140.5px;height:16.2px;background:#2c2c2c;"></div>
<svg style="left:7.4px;top:501.2px" width="3.8" height="5.4" viewBox="0 0 3.6 5"><path d="M0.2 0.2 L3.4 2.5 L0.2 4.8 Z" fill="#b0b0b0"/></svg>
<div class="t" style="left:14.5px;top:498.8px;font-size:6.3px;color:#d0d0d0;font-weight:bold">Collections</div>
<svg style="left:112px;top:499.4px" width="8.6" height="8.6" viewBox="0 0 8.6 8.6"><circle cx="4.3" cy="4.3" r="3.7" fill="none" stroke="#d0d0d0" stroke-width="0.85"/><path d="M4.3 2.4 V6.2 M2.4 4.3 H6.2" stroke="#d0d0d0" stroke-width="0.9"/></svg>
<svg style="left:127px;top:500px" width="8" height="8" viewBox="0 0 8 8"><circle cx="3.3" cy="3.3" r="2.6" fill="none" stroke="#d0d0d0" stroke-width="0.95"/><path d="M5.2 5.2 L7.5 7.5" stroke="#d0d0d0" stroke-width="1.1" stroke-linecap="round"/></svg>
<div class="abs" style="left:0px;top:513px;width:866px;height:3px;background:#151515;"></div>
<div class="abs" style="left:2px;top:511.9px;width:141px;height:2px;background:#151515;"></div>
<div class="abs" style="left:142.5px;top:385.4px;width:2.5px;height:128px;background:#151515;"></div>
<div class="abs" style="left:145px;top:385.4px;width:719.8px;height:112px;background:#242424;"></div>
<div class="abs" style="left:145px;top:384.3px;width:719.8px;height:1.1px;background:#1e1e1e;"></div>
<div class="abs" style="left:149px;top:388.8px;width:228.2px;height:10.2px;background:#050505;border-radius:5.2px"></div>
<svg style="left:152.2px;top:390px" width="8" height="8" viewBox="0 0 8 8"><circle cx="3.3" cy="3.3" r="2.6" fill="none" stroke="#d0d0d0" stroke-width="0.95"/><path d="M5.2 5.2 L7.5 7.5" stroke="#d0d0d0" stroke-width="1.1" stroke-linecap="round"/></svg>
<div class="t" style="left:163.6px;top:389.1px;font-size:6.8px;color:#5c5c5c;">Search Content</div>
<svg style="left:381px;top:391px" width="6" height="6" viewBox="0 0 6 6"><path d="M0.3 0.3 H4.8 L5.7 1.2 V5.7 H0.3 Z" fill="none" stroke="#6e6e6e" stroke-width="0.7"/><rect x="1.4" y="0.3" width="2.6" height="1.6" fill="#6e6e6e"/><rect x="1.4" y="3.4" width="3.2" height="2.3" fill="#6e6e6e"/></svg>
<svg style="left:393.2px;top:390.6px" width="8" height="7" viewBox="0 0 8 7"><path d="M0.2 0.6 H7.8 M1.6 3.2 H6.4 M3 5.8 H5" stroke="#c8c8c8" stroke-width="1.1"/></svg>
<svg style="left:404.4px;top:392.9px" width="5" height="3.4" viewBox="0 0 6 4"><path d="M0.6 0.6 L3 3.2 L5.4 0.6" fill="none" stroke="#c8c8c8" stroke-width="1.35" stroke-linecap="round" stroke-linejoin="round"/></svg>
<svg width="0" height="0" style="left:0;top:0"><defs><linearGradient id="fg" gradientUnits="userSpaceOnUse" x1="0" y1="25.4" x2="35.2" y2="-9.8"><stop offset="0" stop-color="#bb9660"/><stop offset="0.345" stop-color="#b6915b"/><stop offset="0.355" stop-color="#a98653"/><stop offset="0.525" stop-color="#ab8855"/><stop offset="0.535" stop-color="#b18d59"/><stop offset="1" stop-color="#ad8955"/></linearGradient></defs></svg>
<svg style="left:153.0px;top:412.8px" width="36" height="26.4" viewBox="0 0 36 26.4"><rect x="0.4" y="2.8" width="35.3" height="23.5" rx="1" fill="#131313"/><path d="M0.7 0.2 H13.6 Q14.4 0.2 14.9 0.9 L16.4 3 V5 H0 V0.9 Q0 0.2 0.7 0.2 Z" fill="#9b7b49"/><path d="M0 4.9 H14.6 L16 2.5 H34.6 Q35.2 2.5 35.2 3.1 V25.4 H0 Z" fill="url(#fg)"/><rect x="0" y="24.6" width="35.2" height="0.9" fill="#8c6d40"/></svg>
<div class="t" style="left:141.6px;width:60px;text-align:center;top:449.1px;font-size:6.3px;color:#a2a2a2">Animations</div>
<svg style="left:203.3px;top:412.8px" width="36" height="26.4" viewBox="0 0 36 26.4"><rect x="0.4" y="2.8" width="35.3" height="23.5" rx="1" fill="#131313"/><path d="M0.7 0.2 H13.6 Q14.4 0.2 14.9 0.9 L16.4 3 V5 H0 V0.9 Q0 0.2 0.7 0.2 Z" fill="#9b7b49"/><path d="M0 4.9 H14.6 L16 2.5 H34.6 Q35.2 2.5 35.2 3.1 V25.4 H0 Z" fill="url(#fg)"/><rect x="0" y="24.6" width="35.2" height="0.9" fill="#8c6d40"/></svg>
<div class="t" style="left:191.9px;width:60px;text-align:center;top:449.1px;font-size:5.95px;color:#a2a2a2">ArchViz</div>
<div class="t" style="left:191.9px;width:60px;text-align:center;top:456.15px;font-size:5.95px;color:#a2a2a2">InteriorVol3</div>
<svg style="left:253.6px;top:412.8px" width="36" height="26.4" viewBox="0 0 36 26.4"><rect x="0.4" y="2.8" width="35.3" height="23.5" rx="1" fill="#131313"/><path d="M0.7 0.2 H13.6 Q14.4 0.2 14.9 0.9 L16.4 3 V5 H0 V0.9 Q0 0.2 0.7 0.2 Z" fill="#9b7b49"/><path d="M0 4.9 H14.6 L16 2.5 H34.6 Q35.2 2.5 35.2 3.1 V25.4 H0 Z" fill="url(#fg)"/><rect x="0" y="24.6" width="35.2" height="0.9" fill="#8c6d40"/></svg>
<div class="t" style="left:242.2px;width:60px;text-align:center;top:449.1px;font-size:5.95px;color:#a2a2a2">Cameras</div>
<svg style="left:303.9px;top:412.8px" width="36" height="26.4" viewBox="0 0 36 26.4"><rect x="0.4" y="2.8" width="35.3" height="23.5" rx="1" fill="#131313"/><path d="M0.7 0.2 H13.6 Q14.4 0.2 14.9 0.9 L16.4 3 V5 H0 V0.9 Q0 0.2 0.7 0.2 Z" fill="#9b7b49"/><path d="M0 4.9 H14.6 L16 2.5 H34.6 Q35.2 2.5 35.2 3.1 V25.4 H0 Z" fill="url(#fg)"/><rect x="0" y="24.6" width="35.2" height="0.9" fill="#8c6d40"/></svg>
<div class="t" style="left:292.5px;width:60px;text-align:center;top:449.1px;font-size:5.85px;color:#a2a2a2">Clouds_and_</div>
<div class="t" style="left:292.5px;width:60px;text-align:center;top:456.15px;font-size:5.95px;color:#a2a2a2">Skies</div>
<svg style="left:354.2px;top:412.8px" width="36" height="26.4" viewBox="0 0 36 26.4"><rect x="0.4" y="2.8" width="35.3" height="23.5" rx="1" fill="#131313"/><path d="M0.7 0.2 H13.6 Q14.4 0.2 14.9 0.9 L16.4 3 V5 H0 V0.9 Q0 0.2 0.7 0.2 Z" fill="#9b7b49"/><path d="M0 4.9 H14.6 L16 2.5 H34.6 Q35.2 2.5 35.2 3.1 V25.4 H0 Z" fill="url(#fg)"/><rect x="0" y="24.6" width="35.2" height="0.9" fill="#8c6d40"/></svg>
<div class="t" style="left:342.8px;width:60px;text-align:center;top:449.1px;font-size:5.95px;color:#a2a2a2">Dreamscape</div>
<div class="t" style="left:342.8px;width:60px;text-align:center;top:456.15px;font-size:5.95px;color:#a2a2a2">Series</div>
<svg style="left:404.5px;top:412.8px" width="36" height="26.4" viewBox="0 0 36 26.4"><rect x="0.4" y="2.8" width="35.3" height="23.5" rx="1" fill="#131313"/><path d="M0.7 0.2 H13.6 Q14.4 0.2 14.9 0.9 L16.4 3 V5 H0 V0.9 Q0 0.2 0.7 0.2 Z" fill="#9b7b49"/><path d="M0 4.9 H14.6 L16 2.5 H34.6 Q35.2 2.5 35.2 3.1 V25.4 H0 Z" fill="url(#fg)"/><rect x="0" y="24.6" width="35.2" height="0.9" fill="#8c6d40"/></svg>
<div class="t" style="left:393.1px;width:60px;text-align:center;top:449.1px;font-size:5.95px;color:#a2a2a2">European</div>
<div class="t" style="left:393.1px;width:60px;text-align:center;top:456.15px;font-size:5.95px;color:#a2a2a2">Hornbeam</div>
<svg style="left:454.8px;top:412.8px" width="36" height="26.4" viewBox="0 0 36 26.4"><rect x="0.4" y="2.8" width="35.3" height="23.5" rx="1" fill="#131313"/><path d="M0.7 0.2 H13.6 Q14.4 0.2 14.9 0.9 L16.4 3 V5 H0 V0.9 Q0 0.2 0.7 0.2 Z" fill="#9b7b49"/><path d="M0 4.9 H14.6 L16 2.5 H34.6 Q35.2 2.5 35.2 3.1 V25.4 H0 Z" fill="url(#fg)"/><rect x="0" y="24.6" width="35.2" height="0.9" fill="#8c6d40"/></svg>
<div class="t" style="left:443.4px;width:60px;text-align:center;top:449.1px;font-size:5.95px;color:#a2a2a2">FirstPerson</div>
<svg style="left:505.1px;top:412.8px" width="36" height="26.4" viewBox="0 0 36 26.4"><rect x="0.4" y="2.8" width="35.3" height="23.5" rx="1" fill="#131313"/><path d="M0.7 0.2 H13.6 Q14.4 0.2 14.9 0.9 L16.4 3 V5 H0 V0.9 Q0 0.2 0.7 0.2 Z" fill="#9b7b49"/><path d="M0 4.9 H14.6 L16 2.5 H34.6 Q35.2 2.5 35.2 3.1 V25.4 H0 Z" fill="url(#fg)"/><rect x="0" y="24.6" width="35.2" height="0.9" fill="#8c6d40"/></svg>
<div class="t" style="left:493.7px;width:60px;text-align:center;top:449.1px;font-size:5.95px;color:#a2a2a2">FirstPerson</div>
<div class="t" style="left:493.7px;width:60px;text-align:center;top:456.15px;font-size:5.95px;color:#a2a2a2">Arms</div>
<svg style="left:555.4px;top:412.8px" width="36" height="26.4" viewBox="0 0 36 26.4"><rect x="0.4" y="2.8" width="35.3" height="23.5" rx="1" fill="#131313"/><path d="M0.7 0.2 H13.6 Q14.4 0.2 14.9 0.9 L16.4 3 V5 H0 V0.9 Q0 0.2 0.7 0.2 Z" fill="#9b7b49"/><path d="M0 4.9 H14.6 L16 2.5 H34.6 Q35.2 2.5 35.2 3.1 V25.4 H0 Z" fill="url(#fg)"/><rect x="0" y="24.6" width="35.2" height="0.9" fill="#8c6d40"/></svg>
<div class="t" style="left:544.0px;width:60px;text-align:center;top:449.1px;font-size:5.7px;color:#a2a2a2">Level</div>
<div class="t" style="left:544.0px;width:60px;text-align:center;top:456.15px;font-size:5.95px;color:#a2a2a2">Prototyping</div>
<svg style="left:605.7px;top:412.8px" width="36" height="26.4" viewBox="0 0 36 26.4"><rect x="0.4" y="2.8" width="35.3" height="23.5" rx="1" fill="#131313"/><path d="M0.7 0.2 H13.6 Q14.4 0.2 14.9 0.9 L16.4 3 V5 H0 V0.9 Q0 0.2 0.7 0.2 Z" fill="#9b7b49"/><path d="M0 4.9 H14.6 L16 2.5 H34.6 Q35.2 2.5 35.2 3.1 V25.4 H0 Z" fill="url(#fg)"/><rect x="0" y="24.6" width="35.2" height="0.9" fill="#8c6d40"/></svg>
<div class="t" style="left:594.3px;width:60px;text-align:center;top:449.1px;font-size:5.95px;color:#a2a2a2">Materials</div>
<svg style="left:656.0px;top:412.8px" width="36" height="26.4" viewBox="0 0 36 26.4"><rect x="0.4" y="2.8" width="35.3" height="23.5" rx="1" fill="#131313"/><path d="M0.7 0.2 H13.6 Q14.4 0.2 14.9 0.9 L16.4 3 V5 H0 V0.9 Q0 0.2 0.7 0.2 Z" fill="#9b7b49"/><path d="M0 4.9 H14.6 L16 2.5 H34.6 Q35.2 2.5 35.2 3.1 V25.4 H0 Z" fill="url(#fg)"/><rect x="0" y="24.6" width="35.2" height="0.9" fill="#8c6d40"/></svg>
<div class="t" style="left:644.6px;width:60px;text-align:center;top:449.1px;font-size:5.95px;color:#a2a2a2">Mixamo</div>
<svg style="left:706.3px;top:412.8px" width="36" height="26.4" viewBox="0 0 36 26.4"><rect x="0.4" y="2.8" width="35.3" height="23.5" rx="1" fill="#131313"/><path d="M0.7 0.2 H13.6 Q14.4 0.2 14.9 0.9 L16.4 3 V5 H0 V0.9 Q0 0.2 0.7 0.2 Z" fill="#9b7b49"/><path d="M0 4.9 H14.6 L16 2.5 H34.6 Q35.2 2.5 35.2 3.1 V25.4 H0 Z" fill="url(#fg)"/><rect x="0" y="24.6" width="35.2" height="0.9" fill="#8c6d40"/></svg>
<div class="t" style="left:694.9px;width:60px;text-align:center;top:449.1px;font-size:5.95px;color:#a2a2a2">ModernHouse</div>
<svg style="left:756.6px;top:412.8px" width="36" height="26.4" viewBox="0 0 36 26.4"><rect x="0.4" y="2.8" width="35.3" height="23.5" rx="1" fill="#131313"/><path d="M0.7 0.2 H13.6 Q14.4 0.2 14.9 0.9 L16.4 3 V5 H0 V0.9 Q0 0.2 0.7 0.2 Z" fill="#9b7b49"/><path d="M0 4.9 H14.6 L16 2.5 H34.6 Q35.2 2.5 35.2 3.1 V25.4 H0 Z" fill="url(#fg)"/><rect x="0" y="24.6" width="35.2" height="0.9" fill="#8c6d40"/></svg>
<div class="t" style="left:745.2px;width:60px;text-align:center;top:449.1px;font-size:5.95px;color:#a2a2a2">MSPresets</div>
<svg style="left:806.9px;top:412.8px" width="36" height="26.4" viewBox="0 0 36 26.4"><rect x="0.4" y="2.8" width="35.3" height="23.5" rx="1" fill="#131313"/><path d="M0.7 0.2 H13.6 Q14.4 0.2 14.9 0.9 L16.4 3 V5 H0 V0.9 Q0 0.2 0.7 0.2 Z" fill="#9b7b49"/><path d="M0 4.9 H14.6 L16 2.5 H34.6 Q35.2 2.5 35.2 3.1 V25.4 H0 Z" fill="url(#fg)"/><rect x="0" y="24.6" width="35.2" height="0.9" fill="#8c6d40"/></svg>
<div class="t" style="left:795.5px;width:60px;text-align:center;top:449.1px;font-size:5.95px;color:#a2a2a2">Planets</div>
<div class="abs" style="left:145px;top:486.9px;width:715px;height:9.5px;overflow:hidden">
<svg style="left:8.0px;top:0px" width="36" height="26.4" viewBox="0 0 36 26.4"><rect x="0.4" y="2.8" width="35.3" height="23.5" rx="1" fill="#131313"/><path d="M0.7 0.2 H13.6 Q14.4 0.2 14.9 0.9 L16.4 3 V5 H0 V0.9 Q0 0.2 0.7 0.2 Z" fill="#9b7b49"/><path d="M0 4.9 H14.6 L16 2.5 H34.6 Q35.2 2.5 35.2 3.1 V25.4 H0 Z" fill="url(#fg)"/><rect x="0" y="24.6" width="35.2" height="0.9" fill="#8c6d40"/></svg>
<svg style="left:58.3px;top:0px" width="36" height="26.4" viewBox="0 0 36 26.4"><rect x="0.4" y="2.8" width="35.3" height="23.5" rx="1" fill="#131313"/><path d="M0.7 0.2 H13.6 Q14.4 0.2 14.9 0.9 L16.4 3 V5 H0 V0.9 Q0 0.2 0.7 0.2 Z" fill="#9b7b49"/><path d="M0 4.9 H14.6 L16 2.5 H34.6 Q35.2 2.5 35.2 3.1 V25.4 H0 Z" fill="url(#fg)"/><rect x="0" y="24.6" width="35.2" height="0.9" fill="#8c6d40"/></svg>
<svg style="left:108.6px;top:0px" width="36" height="26.4" viewBox="0 0 36 26.4"><rect x="0.4" y="2.8" width="35.3" height="23.5" rx="1" fill="#131313"/><path d="M0.7 0.2 H13.6 Q14.4 0.2 14.9 0.9 L16.4 3 V5 H0 V0.9 Q0 0.2 0.7 0.2 Z" fill="#9b7b49"/><path d="M0 4.9 H14.6 L16 2.5 H34.6 Q35.2 2.5 35.2 3.1 V25.4 H0 Z" fill="url(#fg)"/><rect x="0" y="24.6" width="35.2" height="0.9" fill="#8c6d40"/></svg>
</div>
<div class="abs" style="left:854.6px;top:407px;width:4px;height:61px;background:#555555;border-radius:2px"></div>
<div class="abs" style="left:145px;top:496.6px;width:719.8px;height:16.4px;background:#242424;"></div>
<div class="abs" style="left:145px;top:496.3px;width:714.6px;height:0.8px;background:#191919;"></div>
<div class="t" style="left:149.6px;top:501.6px;font-size:6.6px;color:#b8b8b8;">17 items</div>
</body></html>
